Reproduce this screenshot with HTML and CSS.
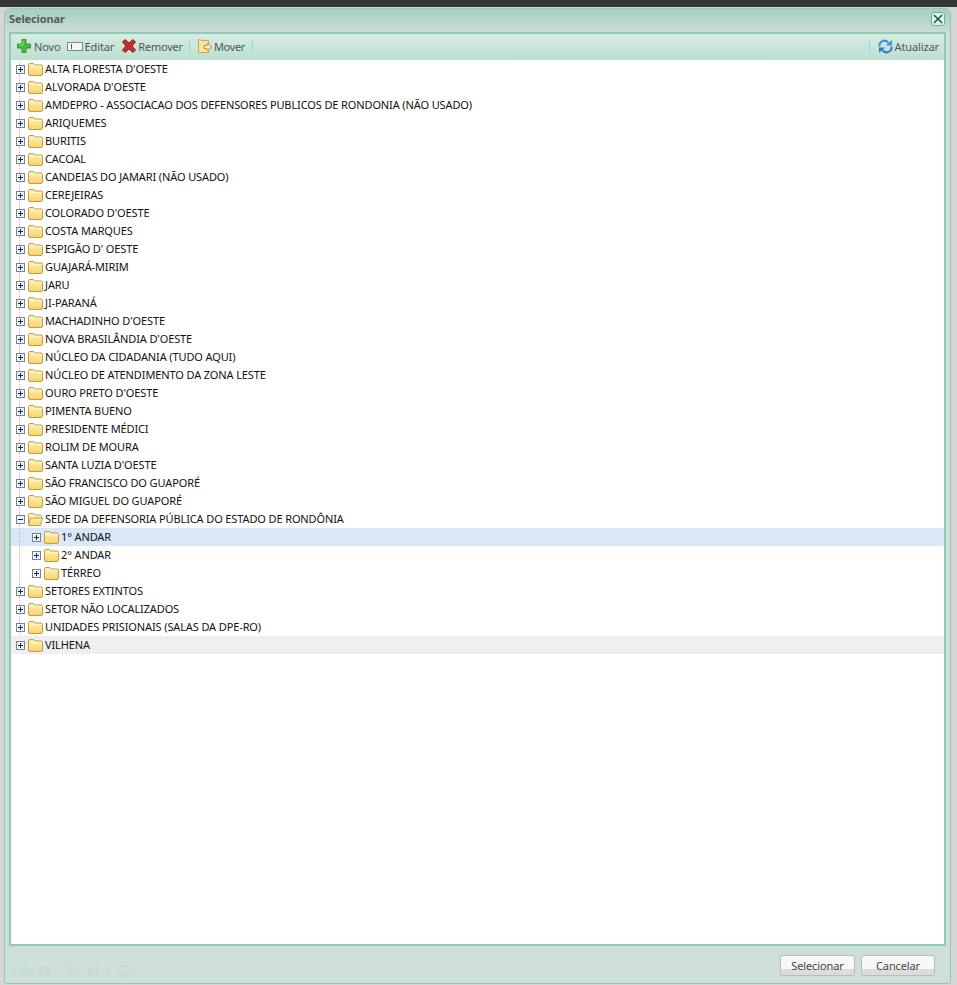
FILE: index.html
```html
<!DOCTYPE html>
<html lang="en">
<head>
    <meta charset="UTF-8">
    <title>Selecionar</title>
    <link rel="stylesheet" href="styles.css">
</head>
<body>
    <svg class="icon-defs" width="0" height="0">
        <defs>
            <linearGradient id="g-folder" x1="0" y1="0" x2="0" y2="1">
                <stop offset="0" stop-color="#fff0b4"/>
                <stop offset="1" stop-color="#f8d468"/>
            </linearGradient>
        </defs>
        <symbol id="i-folder" viewBox="0 0 15 13">
            <path d="M.5 3V2Q.5.500 2 .500h3q1 0 1.500 1l.3.500H13q1.500 0 1.500 1.500V11q0 1.500-1.500 1.500H2Q.5 12.500.5 11z" fill="url(#g-folder)" stroke="#bd9e49"/>
            <path d="M1.500 3.500h12" stroke="#fff8d8"/>
        </symbol>
        <symbol id="i-folder-open" viewBox="0 0 15 13">
            <path d="M.5 11V2Q.5.500 2 .500h3q1 0 1.500 1l.3.500H12q1.500 0 1.500 1.500V5" fill="#fdf0bd" stroke="#bd9e49"/>
            <path d="M.5 12.500l2-7.500h12l-2 7.500z" fill="url(#g-folder)" stroke="#bd9e49" stroke-linejoin="round"/>
        </symbol>
        <symbol id="i-plus" viewBox="0 0 9 9">
            <rect x=".5" y=".5" width="8" height="8" fill="#eef1f5" stroke="#76828e"/>
            <path d="M2 4.500h5M4.500 2v5" stroke="#1d2a38"/>
        </symbol>
        <symbol id="i-minus" viewBox="0 0 9 9">
            <rect x=".5" y=".5" width="8" height="8" fill="#eef1f5" stroke="#76828e"/>
            <path d="M2 4.500h5" stroke="#1d2a38"/>
        </symbol>
    </svg>

    <div class="topbar"></div>

    <div class="window">
        <div class="titlebar">
            <span class="title">Selecionar</span>
            <button class="close">
                <svg width="10" height="10" viewBox="0 0 10 10"><path d="M1 1l8 8M9 1l-8 8" stroke="#0d5a44" stroke-width="1.500"/></svg>
            </button>
        </div>

        <div class="panel">
            <div class="toolbar">
                <a class="tool tool-new">
                    <svg width="14" height="14" viewBox="0 0 14 14"><path d="M5 .5h4v4.500h4.500v4H9v4.500H5V9H.5V5H5z" fill="#45bb3f" stroke="#2f9a2b" stroke-linejoin="round"/><path d="M6 2v4H2" fill="none" stroke="#8fe08a"/></svg>
                    Novo
                </a>
                <a class="tool tool-edit">
                    <svg width="16" height="9" viewBox="0 0 16 9"><rect x=".5" y=".5" width="15" height="8" fill="#f4f6f6" stroke="#7f8588"/><path d="M4.500 2v5" stroke="#555"/></svg>
                    Editar
                </a>
                <a class="tool tool-remove">
                    <svg width="14" height="14" viewBox="0 0 14 14"><path d="M.5 3l2.500-2.500L7 4l4-3.500L13.500 3 10 7l3.500 4-2.500 2.500L7 10l-4 3.500L.5 11 4 7z" fill="#cf2a2e" stroke="#8e1a1d" stroke-linejoin="round"/></svg>
                    Remover
                </a>
                <span class="sep"></span>
                <a class="tool tool-move">
                    <svg width="16" height="16" viewBox="0 0 16 16"><path d="M1.500 1.500l4 1h6v12h-10z" fill="#fbe3a2" stroke="#c9a64c" stroke-linejoin="round"/><path d="M1.500 1.500v3" stroke="#7fb6e0"/><path d="M7 7.500h3V5.500l5 3.500-5 3.500v-2H7z" fill="#fdf0c5" stroke="#b8963f" stroke-linejoin="round"/></svg>
                    Mover
                </a>
                <span class="sep"></span>
                <span class="spacer"></span>
                <span class="sep sep-right"></span>
                <a class="tool">
                    <svg width="15" height="15" viewBox="0 0 15 15"><path d="M1.500 7.500A5 5 0 0 1 10.500 3.800" fill="none" stroke="#3d8fdc" stroke-width="2"/><path d="M8 6.500h6v-5.500z" fill="#3d8fdc"/><path d="M13.500 7.500A5 5 0 0 1 4.500 11.200" fill="none" stroke="#2f7cc8" stroke-width="2"/><path d="M7 8.500H1v5.500z" fill="#2f7cc8"/></svg>
                    Atualizar
                </a>
            </div>

            <ul class="tree">
                <li class="node"><svg class="expander"><use href="#i-plus"/></svg><svg class="folder"><use href="#i-folder"/></svg>ALTA FLORESTA D'OESTE</li>
                <li class="node"><svg class="expander"><use href="#i-plus"/></svg><svg class="folder"><use href="#i-folder"/></svg>ALVORADA D'OESTE</li>
                <li class="node"><svg class="expander"><use href="#i-plus"/></svg><svg class="folder"><use href="#i-folder"/></svg>AMDEPRO - ASSOCIACAO DOS DEFENSORES PUBLICOS DE RONDONIA (NÃO USADO)</li>
                <li class="node"><svg class="expander"><use href="#i-plus"/></svg><svg class="folder"><use href="#i-folder"/></svg>ARIQUEMES</li>
                <li class="node"><svg class="expander"><use href="#i-plus"/></svg><svg class="folder"><use href="#i-folder"/></svg>BURITIS</li>
                <li class="node"><svg class="expander"><use href="#i-plus"/></svg><svg class="folder"><use href="#i-folder"/></svg>CACOAL</li>
                <li class="node"><svg class="expander"><use href="#i-plus"/></svg><svg class="folder"><use href="#i-folder"/></svg>CANDEIAS DO JAMARI (NÃO USADO)</li>
                <li class="node"><svg class="expander"><use href="#i-plus"/></svg><svg class="folder"><use href="#i-folder"/></svg>CEREJEIRAS</li>
                <li class="node"><svg class="expander"><use href="#i-plus"/></svg><svg class="folder"><use href="#i-folder"/></svg>COLORADO D'OESTE</li>
                <li class="node"><svg class="expander"><use href="#i-plus"/></svg><svg class="folder"><use href="#i-folder"/></svg>COSTA MARQUES</li>
                <li class="node"><svg class="expander"><use href="#i-plus"/></svg><svg class="folder"><use href="#i-folder"/></svg>ESPIGÃO D' OESTE</li>
                <li class="node"><svg class="expander"><use href="#i-plus"/></svg><svg class="folder"><use href="#i-folder"/></svg>GUAJARÁ-MIRIM</li>
                <li class="node"><svg class="expander"><use href="#i-plus"/></svg><svg class="folder"><use href="#i-folder"/></svg>JARU</li>
                <li class="node"><svg class="expander"><use href="#i-plus"/></svg><svg class="folder"><use href="#i-folder"/></svg>JI-PARANÁ</li>
                <li class="node"><svg class="expander"><use href="#i-plus"/></svg><svg class="folder"><use href="#i-folder"/></svg>MACHADINHO D'OESTE</li>
                <li class="node"><svg class="expander"><use href="#i-plus"/></svg><svg class="folder"><use href="#i-folder"/></svg>NOVA BRASILÂNDIA D'OESTE</li>
                <li class="node"><svg class="expander"><use href="#i-plus"/></svg><svg class="folder"><use href="#i-folder"/></svg>NÚCLEO DA CIDADANIA (TUDO AQUI)</li>
                <li class="node"><svg class="expander"><use href="#i-plus"/></svg><svg class="folder"><use href="#i-folder"/></svg>NÚCLEO DE ATENDIMENTO DA ZONA LESTE</li>
                <li class="node"><svg class="expander"><use href="#i-plus"/></svg><svg class="folder"><use href="#i-folder"/></svg>OURO PRETO D'OESTE</li>
                <li class="node"><svg class="expander"><use href="#i-plus"/></svg><svg class="folder"><use href="#i-folder"/></svg>PIMENTA BUENO</li>
                <li class="node"><svg class="expander"><use href="#i-plus"/></svg><svg class="folder"><use href="#i-folder"/></svg>PRESIDENTE MÉDICI</li>
                <li class="node"><svg class="expander"><use href="#i-plus"/></svg><svg class="folder"><use href="#i-folder"/></svg>ROLIM DE MOURA</li>
                <li class="node"><svg class="expander"><use href="#i-plus"/></svg><svg class="folder"><use href="#i-folder"/></svg>SANTA LUZIA D'OESTE</li>
                <li class="node"><svg class="expander"><use href="#i-plus"/></svg><svg class="folder"><use href="#i-folder"/></svg>SÃO FRANCISCO DO GUAPORÉ</li>
                <li class="node"><svg class="expander"><use href="#i-plus"/></svg><svg class="folder"><use href="#i-folder"/></svg>SÃO MIGUEL DO GUAPORÉ</li>
                <li class="node"><svg class="expander"><use href="#i-minus"/></svg><svg class="folder"><use href="#i-folder-open"/></svg>SEDE DA DEFENSORIA PÚBLICA DO ESTADO DE RONDÔNIA</li>
                <li class="node child selected"><svg class="expander"><use href="#i-plus"/></svg><svg class="folder"><use href="#i-folder"/></svg>1° ANDAR</li>
                <li class="node child"><svg class="expander"><use href="#i-plus"/></svg><svg class="folder"><use href="#i-folder"/></svg>2° ANDAR</li>
                <li class="node child"><svg class="expander"><use href="#i-plus"/></svg><svg class="folder"><use href="#i-folder"/></svg>TÉRREO</li>
                <li class="node"><svg class="expander"><use href="#i-plus"/></svg><svg class="folder"><use href="#i-folder"/></svg>SETORES EXTINTOS</li>
                <li class="node"><svg class="expander"><use href="#i-plus"/></svg><svg class="folder"><use href="#i-folder"/></svg>SETOR NÃO LOCALIZADOS</li>
                <li class="node"><svg class="expander"><use href="#i-plus"/></svg><svg class="folder"><use href="#i-folder"/></svg>UNIDADES PRISIONAIS (SALAS DA DPE-RO)</li>
                <li class="node hover"><svg class="expander"><use href="#i-plus"/></svg><svg class="folder"><use href="#i-folder"/></svg>VILHENA</li>
            </ul>
        </div>

        <div class="footer">
            <div class="pager">
                <span class="pager-text">1 de 19</span>
                <svg width="64" height="14" viewBox="0 0 64 14"><path d="M0 2l8 5-8 5zM20 2l8 5-8 5zM28 2h3v10h-3z" fill="#c5dad2"/><path d="M40 1v12" stroke="#c5dad2"/><path d="M50 7a5 5 0 0 1 9-3M62 7a5 5 0 0 1-9 3" fill="none" stroke="#c5dad2" stroke-width="2"/></svg>
            </div>
            <button class="btn">Selecionar</button>
            <button class="btn btn-cancel">Cancelar</button>
        </div>
    </div>
</body>
</html>
```

FILE: styles.css
```css
html, body {
    margin: 0;
    height: 100%;
    overflow: hidden;
}
body {
    background: #d6d6d6;
    font-family: "Noto Sans", "Open Sans", sans-serif;
    font-size: 11px;
    letter-spacing: -0.12px;
}
.icon-defs {
    position: absolute;
}
.topbar {
    height: 7px;
    background: #35363a;
}
.window {
    box-sizing: border-box;
    display: flex;
    flex-direction: column;
    height: 976px;
    margin: 1px 6px 0 4px;
    background: #cddfd8;
    border: 1px solid #8fcbb3;
    border-radius: 6px 6px 2px 2px;
}
.titlebar {
    display: flex;
    align-items: flex-start;
    justify-content: space-between;
    height: 23px;
    padding: 0 5px 0 4px;
    background: linear-gradient(#a5d0bd, #c9ddd5);
    border-radius: 5px 5px 0 0;
}
.title {
    font-weight: bold;
    line-height: 15px;
    padding-top: 2px;
    color: #555c5a;
}
.close {
    display: flex;
    align-items: center;
    justify-content: center;
    box-sizing: border-box;
    width: 14px;
    height: 14px;
    margin-top: 3px;
    padding: 0;
    background: #dff0e8;
    border: 1px solid #6fb096;
    border-radius: 3px;
}
.panel {
    flex: 1;
    display: flex;
    flex-direction: column;
    min-height: 0;
    margin: 0 4px;
    border: 2px solid #8fcbb3;
    background: #fff;
}
.toolbar {
    box-sizing: border-box;
    display: flex;
    align-items: center;
    height: 26px;
    padding: 0 5px 2px 6px;
    background: linear-gradient(#d6ece3, #bce0cf);
    color: #4e5560;
}
.tool {
    display: flex;
    align-items: center;
    gap: 2px;
    margin-right: 7px;
}
.tool:last-child {
    margin-right: 0;
}
.tool-new {
    gap: 3px;
    margin-right: 6px;
}
.tool-edit {
    margin-right: 8px;
}
.tool-remove {
    margin-right: 6px;
    letter-spacing: -0.2px;
}
.tool-move {
    gap: 1px;
    letter-spacing: -0.35px;
}
.sep {
    width: 1px;
    height: 13px;
    margin-right: 7px;
    background: #a4cdf0;
}
.sep-right {
    margin-right: 8px;
}
.spacer {
    flex: 1;
}
.tree {
    flex: 1;
    margin: 0;
    padding: 0;
    list-style: none;
    color: #111;
}
.node {
    display: flex;
    align-items: center;
    height: 18px;
    padding-left: 5px;
    line-height: 18px;
    white-space: nowrap;
    background: linear-gradient(#bbb 50%, transparent 50%) 8px 0 / 1px 2px repeat-y;
}
.child {
    padding-left: 21px;
}
.selected {
    background: linear-gradient(#bbb 50%, transparent 50%) 8px 0 / 1px 2px repeat-y, #d9e7f8;
}
.hover {
    background: #efefef;
}
.expander {
    flex: none;
    width: 9px;
    height: 9px;
    margin-right: 3px;
}
.folder {
    flex: none;
    width: 15px;
    height: 13px;
    margin-right: 2px;
}
.footer {
    display: flex;
    align-items: center;
    gap: 6px;
    height: 37px;
    padding: 2px 15px 0 5px;
    box-sizing: border-box;
}
.pager {
    flex: 1;
    display: flex;
    align-items: center;
    gap: 17px;
    margin-top: 11px;
}
.pager-text {
    font-weight: bold;
    font-size: 12px;
    color: #c5dad2;
}
.btn {
    width: 75px;
    height: 21px;
    padding: 0;
    font-family: inherit;
    font-size: 11px;
    letter-spacing: inherit;
    color: #444;
    background: linear-gradient(#f7f7f7 0 70%, #dcdcdc 70%);
    border: 1px solid #bbb;
    border-radius: 3px;
}
.btn-cancel {
    width: 74px;
}
```
